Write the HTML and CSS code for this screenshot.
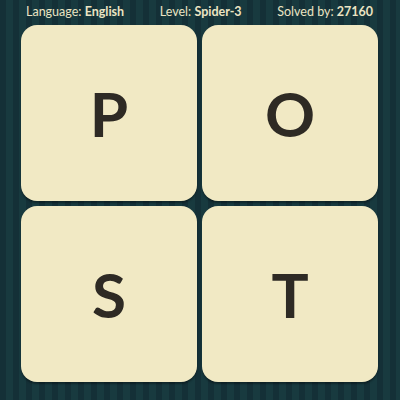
FILE: index.html
```html
<!DOCTYPE html>
<html>
<head>
<meta charset="utf-8">
<link rel="stylesheet" href="styles.css">
</head>
<body>
<div class="page">
  <div class="header">
    <span class="stat">Language: <b>English</b></span>
    <span class="stat">Level: <b>Spider-3</b></span>
    <span class="stat">Solved by: <b>27160</b></span>
  </div>
  <div class="board">
    <div class="tile">P</div>
    <div class="tile">O</div>
    <div class="tile">S</div>
    <div class="tile">T</div>
  </div>
</div>
</body>
</html>
```
FILE: styles.css
```css
html, body {
  margin: 0;
  padding: 0;
}
body {
  width: 400px;
  height: 400px;
  overflow: hidden;
  background-color: #163439;
  background-image: repeating-linear-gradient(90deg, #143037 0px, #143037 6px, #183a3f 6px, #183a3f 13px);
  font-family: Lato, "Open Sans", sans-serif;
}
.page {
  display: flex;
  flex-direction: column;
}
.header {
  height: 25px;
  display: flex;
  justify-content: space-between;
  align-items: center;
  padding: 0 27px 0 26px;
  color: #ebe4c3;
  font-size: 12.5px;
  line-height: 1;
}
.stat b {
  font-weight: 700;
}
.board {
  display: grid;
  grid-template-columns: 176px 176px;
  grid-auto-rows: 176px;
  gap: 5px;
  padding-left: 21px;
}
.tile {
  background: #f1e9c4;
  border-radius: 16px;
  box-shadow: 0 2px 2px rgba(0, 0, 0, 0.35);
  display: flex;
  align-items: center;
  justify-content: center;
  color: #2e2a24;
  font-size: 62px;
  font-weight: 700;
  line-height: 1;
}
```
